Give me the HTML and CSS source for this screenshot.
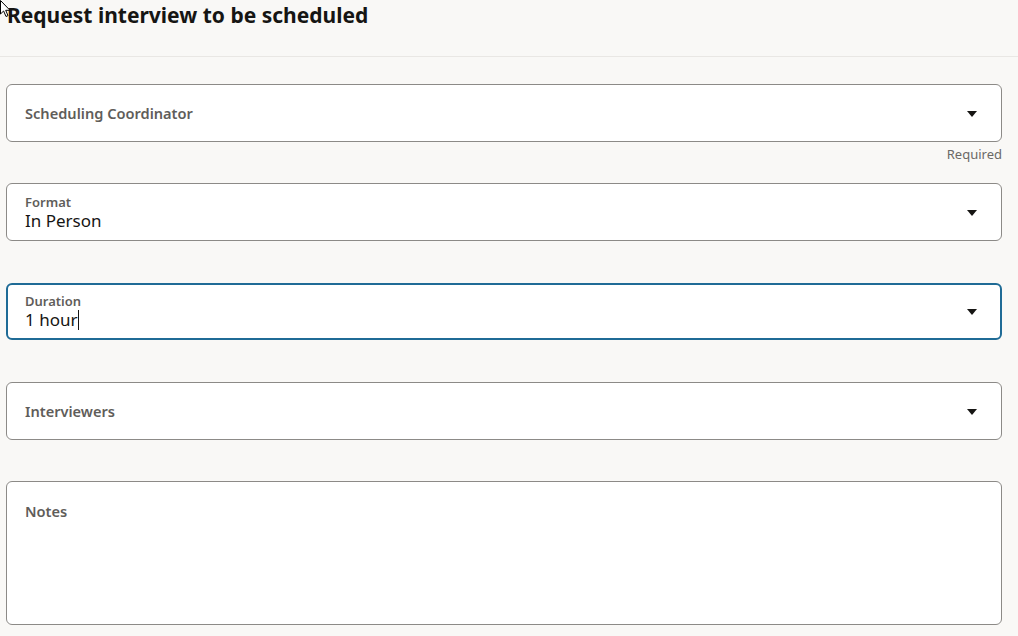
FILE: index.html
```html
<!DOCTYPE html>
<html lang="en">
<head>
<meta charset="utf-8">
<title>Request interview to be scheduled</title>
<link rel="stylesheet" href="styles.css">
</head>
<body>
<svg class="cursor" width="12" height="18" viewBox="0 0 12 18" aria-hidden="true"><path d="M0.5 0.5 L0.5 14 L3.6 11 L6 16.5 L8 15.6 L5.7 10.3 L10 10.3 Z" fill="#fff" stroke="#000" stroke-width="1"/></svg>
<header class="page-header">
  <h1 class="title">Request interview to be scheduled</h1>
</header>
<main class="form">
  <div class="field-block">
    <div class="field select">
      <span class="placeholder">Scheduling Coordinator</span>
      <span class="arrow"></span>
    </div>
    <div class="assist">Required</div>
  </div>
  <div class="field-block">
    <div class="field select filled">
      <div class="content">
        <span class="label">Format</span>
        <span class="value">In Person</span>
      </div>
      <span class="arrow"></span>
    </div>
    <div class="assist tall"></div>
  </div>
  <div class="field-block">
    <div class="field select filled focused">
      <div class="content">
        <span class="label">Duration</span>
        <span class="value">1 hour<span class="caret"></span></span>
      </div>
      <span class="arrow"></span>
    </div>
    <div class="assist tall"></div>
  </div>
  <div class="field-block">
    <div class="field select">
      <span class="placeholder">Interviewers</span>
      <span class="arrow"></span>
    </div>
    <div class="assist"></div>
  </div>
  <div class="field-block">
    <div class="field textarea">
      <span class="placeholder">Notes</span>
    </div>
  </div>
</main>
</body>
</html>
```
FILE: styles.css
```css
html, body {
  margin: 0;
  padding: 0;
}
body {
  background: #f9f8f6;
  font-family: "Noto Sans", "Open Sans", sans-serif;
  color: #161513;
  height: 636px;
  overflow: hidden;
  position: relative;
}
.cursor {
  position: absolute;
  left: 0;
  top: 0;
  z-index: 5;
}
.page-header {
  height: 57px;
  border-bottom: 1px solid #e9e7e4;
  box-sizing: border-box;
  padding: 1px 0 0 7px;
}
.title {
  margin: 0;
  font-size: 21px;
  font-weight: 700;
  line-height: 28px;
  color: #161513;
}
.form {
  padding: 27px 16px 0 6px;
  display: flex;
  flex-direction: column;
}
.field-block {
  display: flex;
  flex-direction: column;
}
.field {
  box-sizing: border-box;
  height: 58px;
  background: #fff;
  border: 1px solid #8c8a87;
  border-radius: 6px;
  display: flex;
  align-items: center;
  padding: 0 24px 0 18px;
}
.field.focused {
  border: 2px solid #1f6b96;
  padding: 0 23px 0 17px;
  height: 57px;
}
.placeholder {
  flex: 1;
  font-size: 14.6px;
  font-weight: 600;
  color: #5f5d5a;
}
.content {
  flex: 1;
  display: flex;
  flex-direction: column;
  padding-top: 1px;
}
.label {
  font-size: 13px;
  font-weight: 600;
  color: #5f5d5a;
  line-height: 16px;
}
.value {
  font-size: 17px;
  line-height: 22px;
  color: #161513;
  display: flex;
  align-items: center;
}
.caret {
  display: inline-block;
  width: 1px;
  height: 20px;
  background: #161513;
  margin-left: 1px;
}
.arrow {
  width: 0;
  height: 0;
  border-left: 5px solid transparent;
  border-right: 5px solid transparent;
  border-top: 6px solid #161513;
  margin-top: 1px;
}
.assist {
  height: 41px;
  box-sizing: border-box;
  padding-top: 4px;
  text-align: right;
  font-size: 13px;
  line-height: 17px;
  color: #6b6966;
}
.assist.tall {
  height: 42px;
}
.field.textarea {
  height: 144px;
  align-items: flex-start;
  padding-top: 19px;
}
```
